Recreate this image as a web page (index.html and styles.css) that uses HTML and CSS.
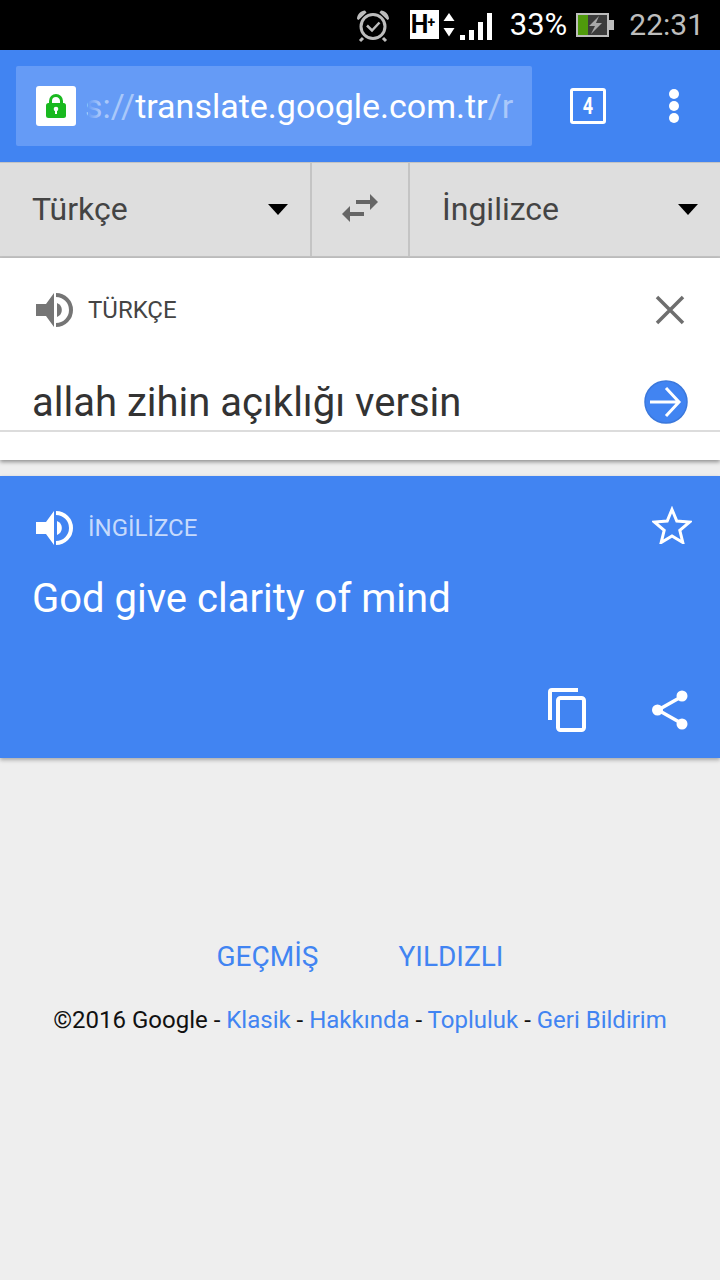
FILE: index.html
```html
<!DOCTYPE html>
<html lang="tr">
<head>
<meta charset="utf-8">
<title>Google Çeviri</title>
<link rel="stylesheet" href="styles.css">
</head>
<body>
<div class="status">
  <svg class="ic-alarm" width="36" height="34" viewBox="0 0 36 34"><g fill="none" stroke="#bdbdbd" stroke-width="3"><circle cx="18" cy="17.500" r="12"/><path d="M12 16.500l5 5 7.500-8" stroke-width="2.500"/><path d="M8 29l-3 3M28 29l3 3"/></g><path d="M2 10C2 5 6 2 10 1.500L11.500 3.500 3.500 11zM34 10C34 5 30 2 26 1.500L24.500 3.500 32.500 11z" fill="#bdbdbd"/></svg>
  <span class="hplus">H<sup>+</sup></span>
  <svg class="ic-updown" width="12" height="24" viewBox="0 0 12 24"><path d="M6 0l5.500 8H.5zM.5 15h11L6 23.500z" fill="#fff"/></svg>
  <svg class="ic-signal" width="32" height="27" viewBox="0 0 32 27"><path d="M0 22h5v5H0zM9 17h5v10H9zM18 9h5v18h-5zM27 0h5v27h-5z" fill="#fff"/></svg>
  <span class="pct">33%</span>
  <svg class="ic-batt" width="38" height="24" viewBox="0 0 38 24"><rect x="1" y="1" width="31" height="22" fill="#3c3c3c" stroke="#bdbdbd" stroke-width="2"/><rect x="2" y="2" width="10" height="20" fill="#4f9a0b"/><rect x="33" y="7" width="5" height="10" fill="#bdbdbd"/><path d="M23 3L13 13h6l-4 8 11-11h-6z" fill="#a8a8a8"/></svg>
  <span class="clock">22:31</span>
</div>

<header class="toolbar">
  <div class="urlbar">
    <span class="lock"><svg width="20" height="24" viewBox="0 0 20 24"><path d="M4.500 11V7a5.500 5.500 0 0 1 11 0v4" fill="none" stroke="#19b91f" stroke-width="3"/><rect x="0" y="9" width="20" height="15" rx="2.500" fill="#19b91f"/><circle cx="10" cy="15" r="2.300" fill="#fff"/><rect x="9" y="15" width="2" height="5" fill="#fff"/></svg></span>
    <span class="url"><span class="dim">s://</span>translate.google.com.tr<span class="dim">/r</span></span>
  </div>
  <span class="tabs"><span class="tabs-num">4</span></span>
  <span class="menu"><i></i><i></i><i></i></span>
</header>

<nav class="langs">
  <div class="lang lang-src"><span>Türkçe</span><b class="caret"></b></div>
  <div class="swap"><svg width="36" height="28" viewBox="0 0 36 28"><path d="M14 6h14V0l8 8-8 8v-6H14zM22 18H8v-6l-8 8 8 8v-6h14z" fill="#666"/></svg></div>
  <div class="lang lang-dst"><span>İngilizce</span><b class="caret"></b></div>
</nav>

<section class="card-in">
  <div class="head">
    <svg class="spk" width="38" height="36" viewBox="0 0 38 36"><path d="M0 12h10l8-11v34l-8-11H0z" fill="#757575"/><path d="M21 11a7.500 7.500 0 0 1 0 14z" fill="#757575"/><path d="M20 3a15 15 0 0 1 0 30" fill="none" stroke="#757575" stroke-width="4"/></svg>
    <span class="label">TÜRKÇE</span>
    <svg class="close" width="30" height="30" viewBox="0 0 30 30"><path d="M2 2l26 26M28 2L2 28" stroke="#6e6e6e" stroke-width="3.500" fill="none"/></svg>
  </div>
  <div class="input">
    <span class="input-text">allah zihin açıklığı versin</span>
    <svg class="go" width="44" height="44" viewBox="0 0 44 44"><circle cx="22" cy="22" r="21" fill="#4184f2" stroke="#3b78dc" stroke-width="1.500"/><path d="M6 22h29M22 8l13 14-13 14" fill="none" stroke="#fff" stroke-width="3"/></svg>
  </div>
</section>

<section class="card-out">
  <div class="head head-out">
    <svg class="spk" width="38" height="36" viewBox="0 0 38 36"><path d="M0 12h10l8-11v34l-8-11H0z" fill="#fff"/><path d="M21 11a7.500 7.500 0 0 1 0 14z" fill="#fff"/><path d="M20 3a15 15 0 0 1 0 30" fill="none" stroke="#fff" stroke-width="4"/></svg>
    <span class="label label-out">İNGİLİZCE</span>
    <svg class="star" width="40" height="38" viewBox="0 0 40 38"><path d="M20 3.500l4.800 11.600 12.700 1-9.700 8.200 3 12.200L20 30l-10.800 6.500 3-12.200-9.700-8.200 12.700-1z" fill="none" stroke="#fff" stroke-width="3"/></svg>
  </div>
  <div class="result">God give clarity of mind</div>
  <div class="actions">
    <svg width="38" height="44" viewBox="0 0 38 44"><path d="M2 32V4a2 2 0 0 1 2-2h26" fill="none" stroke="#fff" stroke-width="4"/><rect x="10" y="10" width="26" height="32" rx="2.500" fill="none" stroke="#fff" stroke-width="4"/></svg>
    <svg width="38" height="40" viewBox="0 0 38 40"><path d="M31 7L8 20l23 13" fill="none" stroke="#fff" stroke-width="3.500"/><circle cx="32" cy="6" r="5.500" fill="#fff"/><circle cx="7.500" cy="20" r="5.500" fill="#fff"/><circle cx="32" cy="34" r="5.500" fill="#fff"/></svg>
  </div>
</section>

<footer class="foot">
  <div class="tabs-links"><a>GEÇMİŞ</a><a>YILDIZLI</a></div>
  <div class="legal">©2016 Google - <a>Klasik</a> - <a>Hakkında</a> - <a>Topluluk</a> - <a>Geri Bildirim</a></div>
</footer>
</body>
</html>
```
FILE: styles.css
```css
* { box-sizing: border-box; }
html, body { margin: 0; padding: 0; }
body {
  width: 720px;
  height: 1280px;
  overflow: hidden;
  background: #eeeeee;
  font-family: Roboto, "Liberation Sans", sans-serif;
  color: #333;
}
svg { display: block; flex: none; }

.status {
  height: 50px;
  background: #000;
  display: flex;
  align-items: center;
  padding-right: 16px;
  justify-content: flex-end;
}
.ic-alarm { margin-right: 19px; margin-top: 2px; }
.hplus {
  width: 29px;
  height: 29px;
  background: #fff;
  color: #000;
  font: 700 25px/30px Roboto, sans-serif;
  padding-left: 1px;
  margin-right: 4px;
  letter-spacing: -1px;
  margin-top: -1px;
  white-space: nowrap;
}
.hplus sup { font-size: 14px; line-height: 0; vertical-align: 6px; }
.ic-updown { margin-right: 5px; }
.ic-signal { margin-right: 18px; margin-top: 3px; }
.pct { color: #fff; font-size: 31px; margin-right: 9px; margin-top: -2px; }
.ic-batt { margin-right: 15px; }
.clock { color: #bdbdbd; font-size: 30px; margin-top: -2px; }

.toolbar {
  height: 112px;
  background: #4184f2;
  display: flex;
  align-items: center;
  padding-left: 16px;
}
.urlbar {
  width: 516px;
  height: 80px;
  background: #659bf6;
  border-radius: 2px;
  display: flex;
  align-items: center;
  padding: 0 20px;
  margin-right: 38px;
}
.lock {
  width: 40px;
  height: 40px;
  background: #fff;
  border-radius: 3px;
  display: flex;
  align-items: center;
  justify-content: center;
  flex: none;
  margin-right: 14px;
}
.url {
  color: #fff;
  font-size: 34px;
  white-space: nowrap;
  flex: 1;
  min-width: 0;
  text-indent: -5px;
  position: relative;
}
.url::before {
  content: "";
  position: absolute;
  left: -2px;
  top: 0;
  bottom: 0;
  width: 12px;
  background: linear-gradient(to right, #659bf6, rgba(101,155,246,0));
}
.dim { color: #a9c8fa; }
.tabs {
  width: 36px;
  height: 36px;
  border: 3px solid #fff;
  border-radius: 3px;
  color: #fff;
  font: 700 24px/30px Roboto, sans-serif;
  text-align: center;
  margin-right: 63px;
  flex: none;
}
.tabs-num { display: inline-block; transform: scaleX(.75); }
.menu { display: flex; flex-direction: column; gap: 2px; flex: none; }
.menu i { width: 10px; height: 10px; border-radius: 50%; background: #fff; display: block; }

.langs {
  height: 96px;
  background: #dedede;
  display: flex;
  border-top: 1px solid #c4c4c4;
  border-bottom: 2px solid #c4c4c4;
  font-size: 32px;
  color: #444;
}
.lang { display: flex; align-items: center; justify-content: space-between; padding-left: 32px; }
.lang span { margin-top: -2px; }
.lang-src { width: 310px; padding-right: 22px; }
.lang-dst { flex: 1; padding-right: 22px; }
.swap {
  width: 100px;
  border-left: 2px solid #c4c4c4;
  border-right: 2px solid #c4c4c4;
  display: flex;
  align-items: center;
  justify-content: center;
}
.swap svg { margin-top: -3px; }
.caret {
  width: 0; height: 0;
  border-left: 10px solid transparent;
  border-right: 10px solid transparent;
  border-top: 11px solid #000;
}

.card-in {
  height: 202px;
  background: #fff;
  box-shadow: 0 2px 4px rgba(0,0,0,.4);
}
.head {
  display: flex;
  align-items: center;
  height: 104px;
  padding: 0 35px 0 36px;
}
.label { font-size: 24px; margin-left: 14px; flex: 1; color: #444; }
.input {
  height: 70px;
  border-bottom: 2px solid #dcdcdc;
  display: flex;
  align-items: center;
  justify-content: space-between;
  padding: 0 32px;
  font-size: 40px;
  color: #333;
}
.input-text { margin-top: 13px; white-space: nowrap; }
.go { margin-top: 12px; }

.card-out {
  margin-top: 16px;
  height: 282px;
  background: #4184f2;
  box-shadow: 0 2px 4px rgba(0,0,0,.3);
  color: #fff;
}
.head-out { height: 104px; padding-right: 28px; }
.label-out { color: #c6dafc; }
.star { margin-top: -6px; }
.result { font-size: 40px; padding-left: 32px; height: 113px; margin-top: -5px; }
.actions {
  display: flex;
  justify-content: flex-end;
  align-items: center;
  gap: 64px;
  padding-right: 32px;
}

.foot { text-align: center; padding-top: 182px; }
.foot a { color: #4184f2; }
.tabs-links { display: flex; justify-content: center; gap: 80px; font-size: 28px; }
.legal { font-size: 24px; color: #111; margin-top: 33px; }
```
